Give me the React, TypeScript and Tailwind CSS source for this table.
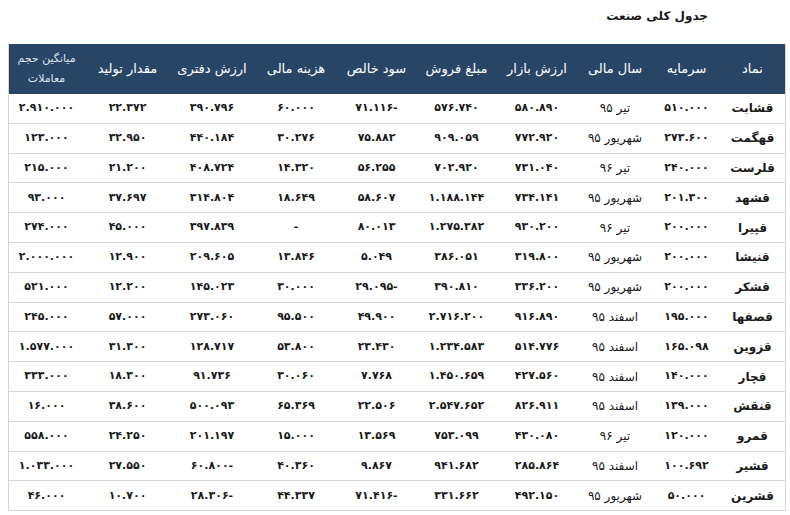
const headers = [
  'نماد',
  'سرمایه',
  'سال مالی',
  'ارزش بازار',
  'مبلغ فروش',
  'سود خالص',
  'هزینه مالی',
  'ارزش دفتری',
  'مقدار تولید',
];

// each row: symbol, capital, fiscal year, market value, sales, net profit, financial cost, book value, production, avg volume
const rows: string[][] = [
  ['قشابت', '۵۱۰.۰۰۰', 'تیر ۹۵', '۵۸۰.۸۹۰', '۵۷۶.۷۴۰', '۷۱.۱۱۶-', '۶۰.۰۰۰', '۳۹۰.۷۹۶', '۲۲.۳۷۲', '۲.۹۱۰.۰۰۰'],
  ['قهگمت', '۲۷۳.۶۰۰', 'شهریور ۹۵', '۷۷۲.۹۲۰', '۹۰۹.۰۵۹', '۷۵.۸۸۲', '۳۰.۲۷۶', '۴۴۰.۱۸۴', '۳۲.۹۵۰', '۱۲۳.۰۰۰'],
  ['قلرست', '۲۴۰.۰۰۰', 'تیر ۹۶', '۷۳۱.۰۴۰', '۷۰۲.۹۲۰', '۵۶.۲۵۵', '۱۴.۳۲۰', '۴۰۸.۷۲۴', '۲۱.۲۰۰', '۲۱۵.۰۰۰'],
  ['قشهد', '۲۰۱.۳۰۰', 'شهریور ۹۵', '۷۳۴.۱۴۱', '۱.۱۸۸.۱۴۴', '۵۸.۶۰۷', '۱۸.۶۴۹', '۳۱۴.۸۰۴', '۳۷.۶۹۷', '۹۳.۰۰۰'],
  ['قپیرا', '۲۰۰.۰۰۰', 'تیر ۹۶', '۹۳۰.۲۰۰', '۱.۲۷۵.۳۸۲', '۸۰.۰۱۳', '-', '۳۹۷.۸۳۹', '۴۵.۰۰۰', '۲۷۴.۰۰۰'],
  ['قنیشا', '۲۰۰.۰۰۰', 'شهریور ۹۵', '۳۱۹.۸۰۰', '۳۸۶.۰۵۱', '۵.۰۴۹', '۱۳.۸۴۶', '۲۰۹.۶۰۵', '۱۲.۹۰۰', '۲.۰۰۰.۰۰۰'],
  ['قشکر', '۲۰۰.۰۰۰', 'شهریور ۹۵', '۳۳۶.۲۰۰', '۳۹۰.۸۱۰', '۲۹.۰۹۵-', '۳۰.۰۰۰', '۱۴۵.۰۲۳', '۱۲.۲۰۰', '۵۲۱.۰۰۰'],
  ['قصفها', '۱۹۵.۰۰۰', 'اسفند ۹۵', '۹۱۶.۸۹۰', '۲.۷۱۶.۲۰۰', '۴۹.۹۰۰', '۹۵.۵۰۰', '۲۷۳.۰۶۰', '۵۷.۰۰۰', '۲۴۵.۰۰۰'],
  ['قزوین', '۱۶۵.۰۹۸', 'اسفند ۹۵', '۵۱۴.۷۷۶', '۱.۲۳۴.۵۸۳', '۲۳.۴۳۰', '۵۳.۸۰۰', '۱۲۸.۷۱۷', '۳۱.۳۰۰', '۱.۵۷۷.۰۰۰'],
  ['قچار', '۱۴۰.۰۰۰', 'اسفند ۹۵', '۴۲۷.۵۶۰', '۱.۴۵۰.۶۵۹', '۷.۷۶۸', '۳۰.۰۶۰', '۹۱.۷۳۶', '۱۸.۳۰۰', '۳۳۳.۰۰۰'],
  ['قنقش', '۱۳۹.۰۰۰', 'اسفند ۹۵', '۸۲۶.۹۱۱', '۲.۵۴۷.۶۵۲', '۲۲.۵۰۶', '۶۵.۳۶۹', '۵۰۰.۰۹۳', '۳۸.۶۰۰', '۱۶.۰۰۰'],
  ['قمرو', '۱۲۰.۰۰۰', 'تیر ۹۶', '۴۳۰.۰۸۰', '۷۵۳.۰۹۹', '۱۳.۵۶۹', '۱۵.۰۰۰', '۲۰۱.۱۹۷', '۲۴.۲۵۰', '۵۵۸.۰۰۰'],
  ['قشیر', '۱۰۰.۶۹۲', 'اسفند ۹۵', '۲۸۵.۸۶۴', '۹۴۱.۶۸۲', '۹.۸۶۷', '۴۰.۳۶۰', '۶۰.۸۰۰-', '۲۷.۵۵۰', '۱.۰۳۳.۰۰۰'],
  ['قشرین', '۵۰.۰۰۰', 'شهریور ۹۵', '۴۹۲.۱۵۰', '۳۳۱.۶۶۲', '۷۱.۴۱۶-', '۴۴.۳۳۷', '۲۸.۳۰۶-', '۱۰.۷۰۰', '۴۶.۰۰۰'],
];

const grid =
  'grid grid-cols-[65px_67px_76px_80px_81px_79px_82px_86px_83px_79px]';

export default function App() {
  return (
    <div
      dir="rtl"
      className="w-[790px] h-[515px] overflow-hidden bg-white text-[#1a1a1a]"
      style={{ fontFamily: '"DejaVu Sans", Tahoma, sans-serif' }}
    >
      <div className="h-[44px] pr-[82px] pt-[7px] text-[12px] font-bold">
        جدول کلی صنعت
      </div>

      <div className="ml-[8px] mr-[4px] border-x border-[#d6d6d6]">
        <div className={`${grid} h-[50px] bg-[#294565] text-white`}>
          {headers.map((h) => (
            <div key={h} className="flex items-center justify-center text-[13px]">
              {h}
            </div>
          ))}
          <div className="flex flex-col items-center justify-center text-[11px] leading-[20px] text-[#dfe6ee]">
            <span>میانگین حجم</span>
            <span>معاملات</span>
          </div>
        </div>

        {rows.map((r) => (
          <div
            key={r[0]}
            className={`${grid} h-[29.8px] border-b border-[#d6d6d6] text-[11px]`}
          >
            {r.map((c, i) => (
              <div
                key={i}
                className={`flex items-center justify-center ${
                  i === 0 ? 'text-[12px] font-bold' : i === 2 ? 'font-normal text-[12px]' : 'font-bold'
                }`}
              >
                {i === 0 || i === 2 ? c : <span dir="ltr">{c}</span>}
              </div>
            ))}
          </div>
        ))}
      </div>
    </div>
  );
}
